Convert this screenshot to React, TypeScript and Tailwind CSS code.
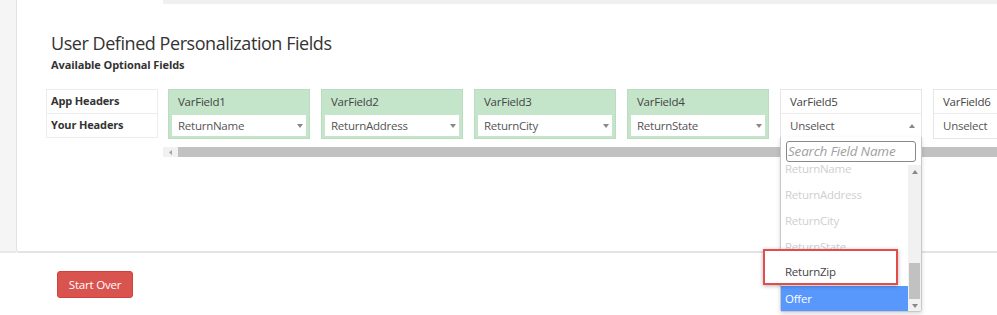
import React from 'react';

interface Campo {
  app: string;
  valor: string;
  asignado: boolean;
  abierto?: boolean;
}

const campos: Campo[] = [
  { app: 'VarField1', valor: 'ReturnName', asignado: true },
  { app: 'VarField2', valor: 'ReturnAddress', asignado: true },
  { app: 'VarField3', valor: 'ReturnCity', asignado: true },
  { app: 'VarField4', valor: 'ReturnState', asignado: true },
  { app: 'VarField5', valor: 'Unselect', asignado: false, abierto: true },
  { app: 'VarField6', valor: 'Unselect', asignado: false },
];

// ReturnZip se pinta dentro de la marca roja, por eso aquí va sin texto
const opciones = [
  { nombre: 'ReturnName', usado: true },
  { nombre: 'ReturnAddress', usado: true },
  { nombre: 'ReturnCity', usado: true },
  { nombre: 'ReturnState', usado: true },
  { nombre: '', usado: false },
  { nombre: 'Offer', usado: false, activo: true },
];

const Caret: React.FC<{ up?: boolean }> = ({ up }) => (
  <svg width="6" height="4" viewBox="0 0 6 4" className="shrink-0">
    {up ? <path d="M0 4 L3 0 L6 4 Z" fill="#888" /> : <path d="M0 0 L6 0 L3 4 Z" fill="#888" />}
  </svg>
);

const Columna: React.FC<{ campo: Campo }> = ({ campo }) => (
  <div
    className={
      campo.asignado
        ? 'w-[142px] shrink-0 bg-[#c5e5cb] border border-[#bcdcc2]'
        : 'w-[142px] shrink-0 bg-white border border-[#e6e6e6]'
    }
  >
    <div className={campo.asignado ? 'h-[24px] flex items-center pl-[9px] text-[11.5px] tracking-[-0.25px] text-[#444]' : 'h-[24px] flex items-center pl-[9px] text-[11.5px] tracking-[-0.25px] text-[#444] border-b border-[#ececec]'}>
      {campo.app}
    </div>
    <div className="h-[24px] px-[3px] py-[1px]">
      <div className="h-[21px] bg-white flex items-center justify-between pl-[6px] pr-[3px] text-[11.5px] tracking-[-0.25px] text-[#555]">
        <span>{campo.valor}</span>
        <Caret up={campo.abierto} />
      </div>
    </div>
  </div>
);

export default function App() {
  return (
    <div className="relative w-[997px] h-[315px] overflow-hidden bg-white" style={{ fontFamily: '"Open Sans", "Noto Sans", sans-serif' }}>
      <div className="flex h-[253px]">
        <div className="w-[16px] shrink-0 bg-[#f5f5f5] border-b-2 border-[#e8e8e8]" />
        <div className="flex-1 min-w-0 bg-white border-l border-b-2 border-[#e3e3e3] rounded-bl-[3px]">
          <div className="ml-[146px] h-[4px] bg-[#f0f0f0]" />
          <div className="pl-[34px] pt-[27px]">
            <h2 className="text-[18px] leading-[24px] text-[#333] tracking-[-0.45px]">User Defined Personalization Fields</h2>
            <div className="text-[11px] font-bold text-[#333] leading-[16px] mt-[2px] tracking-[-0.1px]">Available Optional Fields</div>
          </div>
          <div className="flex mt-[16px] pl-[29px]">
            <div className="w-[112px] shrink-0 h-[49px] border border-[#ececec] text-[11px] font-bold text-[#333] tracking-[-0.15px]">
              <div className="h-[24px] flex items-center pl-[4px] border-b border-[#ececec]">App Headers</div>
              <div className="h-[23px] flex items-center pl-[4px]">Your Headers</div>
            </div>
            <div className="flex-1 min-w-0 ml-[5px] overflow-hidden">
              <div className="flex gap-[11px] pl-[5px]">
                {campos.map((c) => (
                  <Columna key={c.app} campo={c} />
                ))}
              </div>
              <div className="flex mt-[8px] h-[10px] bg-[#f1f1f1]">
                <div className="w-[15px] flex items-center justify-center">
                  <svg width="3" height="5" viewBox="0 0 3 5"><path d="M3 0 L0 2.5 L3 5 Z" fill="#a3a3a3" /></svg>
                </div>
                <div className="flex-1 bg-[#c1c1c1]" />
              </div>
            </div>
          </div>
        </div>
      </div>

      <div className="pl-[57px] pt-[18px]">
        <button className="w-[76px] h-[27px] rounded-[3px] bg-[#d9534f] border border-[#d43f3a] text-white text-[11.5px] tracking-[-0.2px]">Start Over</button>
      </div>

      {/* lista abierta de VarField5 */}
      <div className="absolute left-[780px] top-[137px] w-[142px] h-[175px] bg-white border border-[#c8c8c8] border-t-0 rounded-b-[3px] shadow-[0_2px_4px_rgba(0,0,0,0.15)]">
        <div className="px-[5px] pt-[4px] pb-[3px]">
          <div className="h-[21px] border border-[#888] rounded-[3px] flex items-center pl-[1px] text-[13.5px] italic text-[#a0a0a0] tracking-[-0.2px]">Search Field Name</div>
        </div>
        <div className="relative h-[146px] overflow-hidden flex">
          <div className="flex-1 -mt-[9px]">
            {opciones.map((o, i) => (
              <div
                key={i}
                className={
                  o.activo
                    ? 'h-[26px] flex items-center pl-[4px] text-[11.5px] tracking-[-0.25px] bg-[#5897fb] text-white'
                    : o.usado
                    ? 'h-[26px] flex items-center pl-[4px] text-[11.5px] tracking-[-0.25px] text-[#cfcfcf]'
                    : 'h-[26px] flex items-center pl-[4px] text-[11.5px] tracking-[-0.25px] text-[#444]'
                }
              >
                {o.nombre}
              </div>
            ))}
          </div>
          <div className="w-[13px] bg-[#f1f1f1] flex flex-col items-center">
            <div className="h-[14px] flex items-center"><Caret up /></div>
            <div className="flex-1 w-full flex flex-col justify-end pb-[12px]">
              <div className="h-[36px] mx-[1px] bg-[#c1c1c1]" />
            </div>
            <div className="absolute bottom-[3px]"><Caret /></div>
          </div>
        </div>
      </div>

      {/* marca roja de anotación */}
      <div className="absolute left-[763px] top-[249px] w-[135px] h-[36px] bg-white border-2 border-[#e34c4c] shadow-[0_1px_4px_rgba(0,0,0,0.3)] flex items-center pl-[20px] pt-[9px] text-[11.5px] tracking-[-0.25px] text-[#444]">
        ReturnZip
      </div>
    </div>
  );
}
